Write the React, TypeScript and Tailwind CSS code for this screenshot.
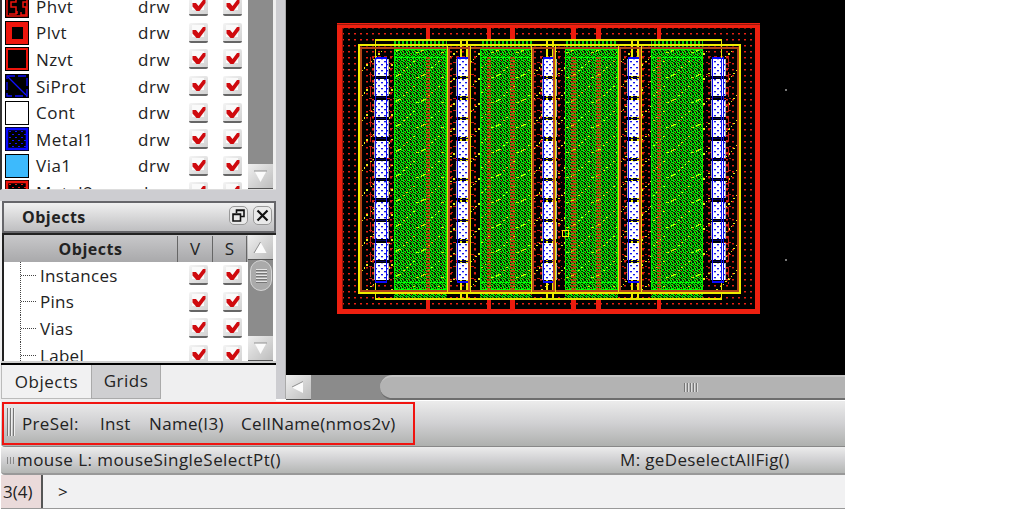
import React from "react";

function Check() {
  return (
    <div className="flex h-5 w-[19px] shrink-0 items-center justify-center rounded-[2px] border-b-2 border-b-[#666] bg-gradient-to-br from-[#f4f4f4] to-[#d2d2d2]">
      <svg width="19" height="18" viewBox="0 0 19 18">
        <rect x="3" y="2" width="12" height="12" fill="#fafafa" />
        <path d="M3.5 7 L7 7 L9.5 10 L14 4 L16.5 4 L16.5 7 L10.5 15 L7.5 15 L3.5 10.5 Z" fill="#cf0a0e" />
      </svg>
    </div>
  );
}

const swatches: Record<string, React.ReactNode> = {
  Phvt: (
    <g stroke="#ee150c" fill="none" strokeWidth="1.5">
      <rect x="2" y="2" width="20" height="20" />
      <path d="M11 0V8H6v5h5v7H4M22 8h-4v5h3v8h-5v-3M12 20v-3" />
    </g>
  ),
  Plvt: <path d="M1 1h22v22H1z M7 6v12h11V6z" fill="#ee150c" fillRule="evenodd" />,
  Nzvt: <rect x="2" y="2" width="20" height="20" fill="none" stroke="#ee150c" strokeWidth="2" />,
  SiProt: (
    <g stroke="#1010ff" fill="none" strokeWidth="1.3">
      <rect x="2" y="2" width="20" height="20" strokeDasharray="8 3" />
      <path d="M3 3L21 21" />
    </g>
  ),
  Cont: <rect x="1" y="1" width="22" height="22" fill="#fff" />,
  Metal1: (
    <g>
      <rect x="2" y="2" width="20" height="20" fill="url(#sw-blue)" stroke="#0808ff" strokeWidth="2.5" />
    </g>
  ),
  Via1: <rect x="1" y="1" width="22" height="22" fill="#3dbafc" />,
  Metal2: <rect x="2" y="2" width="20" height="20" fill="url(#sw-red)" stroke="#ee150c" strokeWidth="2.5" />,
};

function Swatch({ name }: { name: string }) {
  return (
    <svg width="24" height="24" viewBox="0 0 24 24" className="shrink-0">
      <defs>
        <pattern id="sw-blue" width="6" height="6" patternUnits="userSpaceOnUse">
          <path d="M1 1h2v1H1zM4 4h2v1H4z" fill="#1010ff" />
        </pattern>
        <pattern id="sw-red" width="6" height="6" patternUnits="userSpaceOnUse">
          <path d="M1 1h2v1H1zM4 4h2v1H4z" fill="#ee150c" />
        </pattern>
      </defs>
      <rect width="24" height="24" fill="#000" />
      {swatches[name]}
    </svg>
  );
}

function ArrowButton({ dir }: { dir: "up" | "down" | "left" }) {
  const d =
    dir === "up" ? "M12.5 7L18.5 18H6.5Z" : dir === "down" ? "M6.5 7H18.5L12.5 18Z" : "M17 6.5V18L6 12.5Z";
  const edge = dir === "up" ? "M6 18L12.5 7" : dir === "down" ? "M6 7H19" : "M6 12L17 6.5";
  return (
    <div className="h-[25px] w-[25px] shrink-0 border-b border-b-[#555] bg-gradient-to-br from-[#efefef] to-[#bdbdbd]">
      <svg width="25" height="24" viewBox="0 0 25 24">
        <path d={d} fill="#fbfbfb" />
        <path d={edge} stroke="#909090" fill="none" />
      </svg>
    </div>
  );
}

function LayerRow({ name }: { name: string }) {
  return (
    <div className="flex h-[26.6px] shrink-0 items-center pl-[3px]">
      <Swatch name={name} />
      <span className="w-[109px] shrink-0 pl-[7px] tracking-[0.5px]">{name}</span>
      <span className="w-[51px] shrink-0 tracking-[0.6px]">drw</span>
      <Check />
      <span className="w-[15px]" />
      <Check />
    </div>
  );
}

function ObjectRow({ name }: { name: string }) {
  return (
    <div className="flex h-[26.6px] shrink-0 items-center pl-[16px]">
      <svg width="16" height="27" className="shrink-0" shapeRendering="crispEdges">
        <path d="M0.5 0V27M1 13.5H16" stroke="#444" strokeDasharray="1 1" />
      </svg>
      <span className="w-[153px] shrink-0 pl-1 tracking-[0.3px]">{name}</span>
      <Check />
      <span className="w-[15px]" />
      <Check />
    </div>
  );
}

const bodies = [
  [394, 53],
  [480, 52],
  [565, 53],
  [651, 52],
];
const bars = [
  [426, 4],
  [487, 4],
  [510, 5],
  [571, 5],
  [596, 5],
  [657, 4],
];
const contacts = [374, 456, 542, 627, 711];
const innerGaps = [
  [447, 468],
  [531, 553],
  [618, 639],
];

function LayoutCanvas() {
  return (
    <svg width="559" height="375" viewBox="286 0 559 375" className="block bg-black" shapeRendering="crispEdges">
      <defs>
        <pattern id="dots" x="348" y="33" width="6" height="6" patternUnits="userSpaceOnUse">
          <path d="M0 0h2v1H0z" fill="#e82012" />
          <path d="M0 1h2v1H0z" fill="#701008" />
        </pattern>
        <pattern id="dashes" x="348" y="32" width="6" height="12" patternUnits="userSpaceOnUse">
          <path d="M0 0h3v1H0zM3 6h3v1H3z" fill="#c81c10" />
        </pattern>
        <pattern id="mesh" x="394" y="40" width="6" height="6" patternUnits="userSpaceOnUse">
          <rect width="6" height="6" fill="#022402" />
          <path
            d="M0 0h2v1H0zM3 0h1v1H3zM1 1h1v2H1zM4 1h2v1H4zM2 2h2v1H2zM0 3h1v1H0zM3 3h2v1H3zM5 4h1v1H5zM1 4h2v1H1zM3 5h1v1H3zM0 5h1v1H0z"
            fill="#08ee08"
          />
          <path d="M3 1h1v1H3zM0 4h1v1H0z" fill="#069006" />
          <path d="M5 2h1v1H5zM2 5h1v1H2z" fill="#c83a08" />
        </pattern>
        <pattern id="mesh-top" x="394" y="40" width="4" height="6" patternUnits="userSpaceOnUse">
          <path d="M0 0h2v4H0zM0 5h4v1H0z" fill="#08d808" />
        </pattern>
        <pattern id="slash" x="361" y="46" width="25" height="25" patternUnits="userSpaceOnUse">
          <path
            d="M0 24h2v1H0zM3 21h1v2H3zM5 18h2v2H5zM9 15h2v1H9zM12 13h1v1H12zM14 10h2v1H14zM17 7h2v2H17zM20 5h1v1H20zM22 2h2v1H22z"
            fill="#ece816"
          />
        </pattern>
        <pattern id="glint" x="394" y="61" width="25" height="25" patternUnits="userSpaceOnUse">
          <path d="M0 16h2v-2h2v-1h3v1H5v1H3v1H0zM22 16h3v1h-3z" fill="#b4f400" />
          <path d="M9 9h2v1H9zM12 6h2v1h-2zM16 3h1v1h-1zM19 0h2v1h-2z" fill="#c8e000" />
        </pattern>
        <pattern id="contact" x="378" y="61" width="6" height="6" patternUnits="userSpaceOnUse">
          <rect width="6" height="6" fill="#fff" />
          <path d="M0 0h2v1H0zM3 3h2v1H3z" fill="#1414f0" />
          <path d="M0 1h2v1H0zM3 4h2v1H3z" fill="#b0b0f8" />
        </pattern>
      </defs>

      <rect x="342" y="28" width="413" height="281" fill="url(#dots)" />
      <rect x="339.5" y="25.5" width="418" height="286" fill="none" stroke="#ee2010" strokeWidth="5" />
      <path d="M337 24.5H760M342.5 28V309" stroke="#98180c" />
      {bars.map(([x, w]) => (
        <rect key={x} x={x} y="27" width={w} height="284" fill="#ec1c0e" />
      ))}

      <rect x="360" y="47" width="378" height="244" fill="#000" />
      <rect x="360" y="50" width="378" height="240" fill="url(#dots)" />
      <rect x="360" y="47" width="378" height="244" fill="url(#slash)" />
      {contacts.map((x) => (
        <rect key={x} x={x - 5} y="56" width="25" height="228" fill="url(#dashes)" />
      ))}
      <path d="M370.5 57V284M728.5 57V284" stroke="#c81c10" strokeDasharray="10 5" />

      {bodies.map(([x, w]) => (
        <g key={x}>
          <rect x={x} y="40" width={w} height="260" fill="#000" />
          <rect x={x} y="40" width={w} height="9" fill="url(#mesh-top)" />
          <rect x={x} y="49" width={w} height="251" fill="url(#mesh)" />
          <rect x={x} y="50" width={w} height="240" fill="url(#glint)" />
          <path d={`M${x} 49.5h${w}M${x} 57.5h${w}M${x} 282.5h${w}M${x} 289.5h${w}`} stroke="#00fa00" />
          <path d={`M${x + 0.5} 49V290M${x + w - 0.5} 49V290`} stroke="#00f000" />
        </g>
      ))}
      {bars.map(([x, w]) => (
        <path key={x} d={`M${x + w / 2} 57V290`} stroke="#ec3010" strokeWidth={w} strokeDasharray="2 1" opacity="0.7" />
      ))}

      {contacts.map((x, i) => (
        <g key={x}>
          <rect x={x + 1} y="58" width="12" height="225" fill="#000" />
          {i > 0 && i < 4 && (
            <path d={`M${x + 5} 40V299M${x + 11} 40V299`} stroke="#eee800" strokeWidth="2" />
          )}
          {Array.from({ length: 11 }, (_, r) => (
            <g key={r}>
              <rect x={x} y={Math.round(59 + r * 20.4)} width="15" height="17" fill="url(#contact)" />
              <rect x={x} y={Math.round(59 + r * 20.4)} width="1" height="17" fill="#b0b0b4" />
              <rect x={x + 14} y={Math.round(59 + r * 20.4)} width="1" height="17" fill="#b0b0b4" />
              {r < 10 && <rect x={x + 2} y={Math.round(77 + r * 20.4)} width="10" height="1" fill="#000058" />}
            </g>
          ))}
          <path d={`M${x + 1.5} 57V283M${x + 12.5} 57V283`} stroke="#0808f0" />
          <path d={`M${x + 1} 58h12M${x + 1} 282h12`} stroke="#0808ff" strokeWidth="2" />
        </g>
      ))}

      <rect x="375.5" y="40" width="346" height="259" fill="none" stroke="#e8e400" strokeWidth="1.5" />
      <path d="M375.5 58V283M721.5 58V283" stroke="#1414ee" />
      <rect x="360.5" y="47.5" width="377" height="243.5" fill="none" stroke="#b04418" strokeWidth="2" />
      <rect x="358.5" y="45" width="381" height="248" fill="none" stroke="#f0ec00" strokeWidth="2" />
      {innerGaps.map(([a, b]) => (
        <g key={a}>
          <path d={`M${a + 0.5} 44V293M${b + 2.5} 44V293`} stroke="#ece000" />
          <path d={`M${a + 2} 47V291M${b + 1} 47V291`} stroke="#b84a24" strokeWidth="2" />
        </g>
      ))}
      <rect x="562.5" y="230.5" width="6" height="6" fill="none" stroke="#f4f000" strokeWidth="1.5" />
      <path d="M785 89h2v2h-2zM785 259h2v2h-2z" fill="#777" />
    </svg>
  );
}

export default function App() {
  return (
    <div className="h-[509px] w-[1013px] overflow-hidden bg-white font-['Open_Sans','Noto_Sans',sans-serif] text-[17px] leading-none text-[#222]">
      <div className="flex h-full w-[845px] flex-col">
        <div className="flex h-[401px] shrink-0">
          <aside className="flex w-[276px] shrink-0 flex-col bg-[#efeff0]">
            <div className="flex h-[190px] shrink-0 overflow-hidden border-b border-l-2 border-b-[#ddd] border-l-[#333] bg-white">
              <div className="-mt-[7px] flex w-[246px] shrink-0 flex-col">
                {["Phvt", "Plvt", "Nzvt", "SiProt", "Cont", "Metal1", "Via1", "Metal2"].map((n) => (
                  <LayerRow key={n} name={n} />
                ))}
              </div>
              <div className="flex w-[25px] flex-col justify-end bg-[#8c8c8c]">
                <ArrowButton dir="down" />
              </div>
              <div className="w-[3px] bg-[#efefef]" />
            </div>
            <div className="h-[11px] shrink-0 bg-[#cdcdd1]" />
            <div className="ml-[2px] flex h-[32px] shrink-0 items-center border-2 border-[#66666a] bg-gradient-to-b from-[#f0f0f0] to-[#bfbfc1] pl-[18px] pr-0.5">
              <span className="flex-1 text-[16px] font-bold tracking-[0.5px]">Objects</span>
              <div className="-mt-[3px] mr-[5px] flex h-[19px] w-[19px] items-center justify-center rounded-[5px] border border-[#999] bg-[#e9e9e9]">
                <svg width="13" height="13" fill="none" stroke="#111" strokeWidth="1.6">
                  <path d="M4.5 4V1H12V7.5H9M1 5H8.5V12H1ZM4 1.5H12M1 5.5H8.5" />
                </svg>
              </div>
              <div className="-mt-[3px] flex h-[19px] w-[19px] items-center justify-center rounded-[5px] border border-[#999] bg-[#e9e9e9]">
                <svg width="13" height="13" stroke="#111" strokeWidth="2.2">
                  <path d="M1.5 1.5L11.5 11.5M11.5 1.5L1.5 11.5" />
                </svg>
              </div>
            </div>
            <div className="ml-[2px] flex h-[128px] shrink-0 overflow-hidden border-l-2 border-t-2 border-[#222] bg-white">
              <div className="flex w-[244px] shrink-0 flex-col">
                <div className="flex h-[27px] shrink-0 items-center bg-gradient-to-b from-[#c8c8ca] to-[#a9a9ab] text-center">
                  <span className="w-[173px] text-[16px] font-bold tracking-[0.5px]">Objects</span>
                  <span className="flex h-[26px] w-[35px] items-center justify-center border-l border-[#666]">V</span>
                  <span className="flex h-[26px] w-[34px] items-center justify-center border-l border-[#666]">S</span>
                  <span className="h-[26px] border-l border-[#666]" />
                </div>
                {["Instances", "Pins", "Vias", "Label"].map((n) => (
                  <ObjectRow key={n} name={n} />
                ))}
              </div>
              <div className="flex w-[25px] flex-col bg-[#8c8c8c]">
                <ArrowButton dir="up" />
                <div className="ml-[2px] flex h-[31px] w-[22px] shrink-0 items-center justify-center rounded-full border border-[#d4d4d4] bg-[#aaa]">
                  <svg width="11" height="15" shapeRendering="crispEdges">
                    <path d="M0 1.5H11M0 4.5H11M0 7.5H11M0 10.5H11M0 13.5H11" stroke="#e5e5e5" />
                    <path d="M0 2.5H11M0 5.5H11M0 8.5H11M0 11.5H11M0 14.5H11" stroke="#777" />
                  </svg>
                </div>
                <div className="flex-1" />
                <ArrowButton dir="down" />
              </div>
              <div className="w-[3px] bg-[#fafafa]" />
            </div>
            <div className="ml-[1px] h-[4px] shrink-0 border-b-2 border-b-black bg-[#cfcfcf]" />
            <div className="ml-[1px] flex h-[34px] shrink-0">
              <div className="flex w-[90px] items-center justify-center border-b border-l border-[#bbb] bg-[#f1f1f2] tracking-[0.5px]">
                Objects
              </div>
              <div className="flex w-[70px] items-center justify-center border border-t-0 border-[#aaa] bg-[#cfcfd1] pb-[3px] tracking-[0.5px]">
                Grids
              </div>
            </div>
          </aside>
          <div className="mb-[2px] w-[10px] shrink-0 border-r border-r-[#aaa] bg-[#cdcdd1]" />
          <main className="flex w-[559px] flex-col">
            <LayoutCanvas />
            <div className="flex h-[25px] shrink-0 bg-[#8b8b8b]">
              <ArrowButton dir="left" />
              <div className="ml-[69px] flex flex-1 items-center rounded-l-full border-b-2 border-t-2 border-b-[#6e6e6e] border-t-[#c4c4c4] bg-[#b3b3b3] pl-[304px]">
                <svg width="15" height="9" shapeRendering="crispEdges">
                  <path d="M0.5 0V9M3.5 0V9M6.5 0V9M9.5 0V9M12.5 0V9" stroke="#777" />
                  <path d="M1.5 0V9M4.5 0V9M7.5 0V9M10.5 0V9M13.5 0V9" stroke="#ddd" />
                </svg>
              </div>
            </div>
          </main>
        </div>
        <div className="ml-[1px] flex h-[46px] shrink-0 items-start rounded-bl-[4px] border-b border-[#888] bg-gradient-to-b from-[#ececec] via-[#d0d0d2] to-[#aeb0ae] pt-[1px]">
          <div className="ml-[1px] flex h-[43px] w-[413px] items-center border-2 border-[#f01410] pl-[3px] tracking-[0.35px]">
            <svg width="8" height="28" shapeRendering="crispEdges" className="-mt-1 mr-[7px]">
              <path d="M0.5 0V28M3.5 0V28M6.5 0V28" stroke="#777" />
              <path d="M1.5 0V28M4.5 0V28M7.5 0V28" stroke="#eee" />
            </svg>
            <span className="w-[78px] whitespace-nowrap">PreSel:</span>
            <span className="w-[49px] whitespace-nowrap">Inst</span>
            <span className="w-[92px] whitespace-nowrap">Name(I3)</span>
            <span className="whitespace-nowrap">CellName(nmos2v)</span>
          </div>
        </div>
        <div className="ml-[1px] flex h-[28px] shrink-0 items-center rounded-bl-[4px] border-b-2 border-[#999] bg-gradient-to-b from-[#ececec] via-[#d0d0d2] to-[#b4b6b4] pb-[2px] pl-[6px]">
          <svg width="9" height="7" shapeRendering="crispEdges" className="mr-[1px] mt-[2px]">
            <path d="M0.5 0V7M3.5 0V7M6.5 0V7" stroke="#888" />
          </svg>
          <span className="w-[603px] whitespace-nowrap tracking-[0.45px]">mouse L: mouseSingleSelectPt()</span>
          <span className="whitespace-nowrap tracking-[0.35px]">M: geDeselectAllFig()</span>
        </div>
        <div className="ml-[1px] flex h-[34px] shrink-0 items-center border-b border-b-[#999] bg-[#f1f1f2]">
          <div className="flex h-full w-[42px] items-center border-r-2 border-r-[#555] bg-[#eadada] pl-[2px]">3(4)</div>
          <span className="pl-[15px]">&gt;</span>
        </div>
      </div>
    </div>
  );
}
